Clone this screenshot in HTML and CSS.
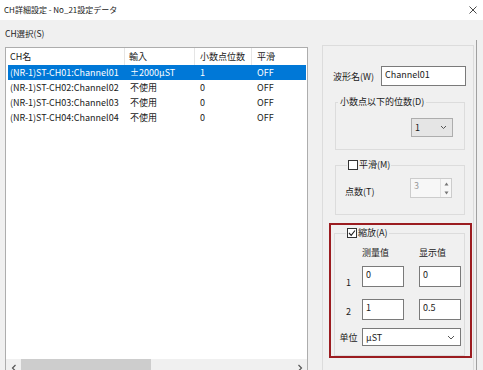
FILE: index.html
```html
<!DOCTYPE html>
<html lang="ja">
<head>
    <meta charset="UTF-8">
    <title>CH詳細設定</title>
    <link rel="stylesheet" href="styles.css">
</head>
<body>
    <div class="window">
        <div class="titlebar">
            <span class="title">CH詳細設定 - No_21設定データ</span>
            <svg class="close" width="8" height="8" viewBox="0 0 8 8"><path d="M0.5 0.5 L7.5 7.5 M7.5 0.5 L0.5 7.5" stroke="#333" stroke-width="0.9"/></svg>
        </div>
        <div class="body">
            <div class="ch-label">CH選択(S)</div>
            <div class="content">
                <!-- channel list -->
                <div class="listbox">
                    <div class="list-head">
                        <div class="hcell c1">CH名</div>
                        <div class="hcell c2">輸入</div>
                        <div class="hcell c3">小数点位数</div>
                        <div class="hcell c4">平滑</div>
                    </div>
                    <div class="list-rows">
                        <div class="row selected">
                            <div class="cell c1">(NR-1)ST-CH01:Channel01</div>
                            <div class="cell c2">±2000μST</div>
                            <div class="cell c3">1</div>
                            <div class="cell c4">OFF</div>
                        </div>
                        <div class="row">
                            <div class="cell c1">(NR-1)ST-CH02:Channel02</div>
                            <div class="cell c2">不使用</div>
                            <div class="cell c3">0</div>
                            <div class="cell c4">OFF</div>
                        </div>
                        <div class="row">
                            <div class="cell c1">(NR-1)ST-CH03:Channel03</div>
                            <div class="cell c2">不使用</div>
                            <div class="cell c3">0</div>
                            <div class="cell c4">OFF</div>
                        </div>
                        <div class="row">
                            <div class="cell c1">(NR-1)ST-CH04:Channel04</div>
                            <div class="cell c2">不使用</div>
                            <div class="cell c3">0</div>
                            <div class="cell c4">OFF</div>
                        </div>
                    </div>
                    <div class="hscroll">
                        <svg class="arrow" width="6" height="8" viewBox="0 0 6 8"><path d="M4.5 1 L1.5 4 L4.5 7" fill="none" stroke="#555" stroke-width="1.2"/></svg>
                        <div class="thumb"></div>
                        <div class="track"></div>
                        <svg class="arrow" width="6" height="8" viewBox="0 0 6 8"><path d="M1.5 1 L4.5 4 L1.5 7" fill="none" stroke="#555" stroke-width="1.2"/></svg>
                    </div>
                </div>

                <!-- settings panel -->
                <div class="side">
                    <div class="name-row">
                        <label class="name-label" for="wave">波形名(W)</label>
                        <input class="textbox name-input" id="wave" type="text" value="Channel01">
                    </div>

                    <fieldset class="group group-d">
                        <legend>小数点以下的位数(D)</legend>
                        <div class="combo combo-gray">
                            <span>1</span>
                            <svg width="7" height="5" viewBox="0 0 7 5"><path d="M1 1 L3.5 3.5 L6 1" fill="none" stroke="#555" stroke-width="1"/></svg>
                        </div>
                    </fieldset>

                    <fieldset class="group group-m">
                        <legend><span class="check"></span>平滑(M)</legend>
                        <div class="points-row">
                            <span>点数(T)</span>
                            <div class="spinner">
                                <span class="spin-val">3</span>
                                <div class="spin-btns">
                                    <svg width="5" height="4" viewBox="0 0 5 4"><path d="M0.5 3.5 L2.5 0.5 L4.5 3.5 Z" fill="#777"/></svg>
                                    <svg width="5" height="4" viewBox="0 0 5 4"><path d="M0.5 0.5 L2.5 3.5 L4.5 0.5 Z" fill="#777"/></svg>
                                </div>
                            </div>
                        </div>
                    </fieldset>

                    <div class="highlight-box">
                        <fieldset class="group group-a">
                            <legend>
                                <span class="check checked">
                                    <svg width="8" height="8" viewBox="0 0 8 8"><path d="M1 4 L3.2 6.3 L7 1.5" fill="none" stroke="#222" stroke-width="1.1"/></svg>
                                </span>縮放(A)
                            </legend>
                            <div class="scale-row scale-head">
                                <span class="lbl"></span>
                                <span class="col">测量值</span>
                                <span class="col">显示值</span>
                            </div>
                            <div class="scale-row r1">
                                <span class="lbl">1</span>
                                <input class="textbox small" type="text" value="0">
                                <input class="textbox small" type="text" value="0">
                            </div>
                            <div class="scale-row r2">
                                <span class="lbl">2</span>
                                <input class="textbox small" type="text" value="1">
                                <input class="textbox small" type="text" value="0.5">
                            </div>
                            <div class="scale-row unit-row">
                                <span class="lbl">单位</span>
                                <div class="combo combo-white">
                                    <span>μST</span>
                                    <svg width="8" height="5" viewBox="0 0 8 5"><path d="M1 1 L4 4 L7 1" fill="none" stroke="#555" stroke-width="1"/></svg>
                                </div>
                            </div>
                        </fieldset>
                    </div>
                </div>
                <div class="edge"></div>
            </div>
        </div>
    </div>
</body>
</html>
```

FILE: styles.css
```css
html, body {
    margin: 0;
    padding: 0;
    height: 100%;
}
body {
    font-family: "Noto Sans CJK JP", "Noto Sans", sans-serif;
    font-size: 9px;
    color: #1a1a1a;
    background: #f0f0f0;
}
.window {
    width: 483px;
    height: 370px;
    overflow: hidden;
}
.titlebar {
    height: 20px;
    background: #fff;
    display: flex;
    align-items: center;
    justify-content: space-between;
    padding: 0 6px 0 4px;
}
.title {
    font-size: 8px;
    line-height: 12px;
}
.body {
    height: 350px;
    background: #f0f0f0;
    overflow: hidden;
}
.ch-label {
    padding: 6px 0 0 5px;
    font-size: 8.5px;
    line-height: 14px;
}
.content {
    display: flex;
    align-items: flex-start;
}

/* list */
.listbox {
    margin: 7px 0 0 5px;
    width: 301px;
    height: 328px;
    border: 1px solid #adadad;
    background: #fff;
    display: flex;
    flex-direction: column;
}
.list-head {
    display: flex;
    height: 17px;
    align-items: center;
}
.hcell {
    box-sizing: border-box;
    height: 17px;
    line-height: 17px;
    padding-left: 4px;
    border-right: 1px solid #e5e5e5;
}
.hcell.c1 { width: 119px; }
.hcell.c2 { width: 70px; padding-left: 4px; }
.hcell.c3 { width: 57px; padding-left: 5px; }
.hcell.c4 { flex: 1; padding-left: 5px; border-right: none; }
.list-rows {
    flex: 1;
    padding: 0 1px 0 2px;
}
.row {
    display: flex;
    height: 15px;
    line-height: 15px;
}
.row.selected {
    background: #0078d7;
    color: #fff;
}
.cell {
    box-sizing: border-box;
    padding-left: 5px;
    white-space: nowrap;
}
.cell.c1 { width: 117px; padding-left: 2px; }
.cell.c2 { width: 70px; }
.cell.c3 { width: 57px; }
.cell.c4 { flex: 1; }
.hscroll {
    height: 17px;
    background: #f0f0f0;
    display: flex;
    align-items: center;
}
.hscroll .arrow {
    margin: 0 4px 0 5px;
}
.thumb {
    width: 130px;
    height: 17px;
    background: #cdcdcd;
}
.track {
    flex: 1;
}

/* right panel */
.side {
    margin: 5px 0 0 14px;
    width: 150px;
    height: 340px;
    border: 1px solid #dcdcdc;
}
.edge {
    margin-left: 2px;
    width: 1px;
    height: 350px;
    background: #a0a0a0;
}
.name-row {
    display: flex;
    align-items: center;
    margin-top: 20px;
    padding-left: 10px;
}
.name-label {
    width: 48px;
}
.textbox {
    box-sizing: border-box;
    font: inherit;
    color: #1a1a1a;
    border: 1px solid #7a7a7a;
    background: #fff;
    padding: 1px 3px 0;
    margin: 0;
    outline: none;
    text-align: left;
    vertical-align: top;
    flex-shrink: 0;
}
.name-input {
    width: 85px;
    height: 20px;
    padding-top: 0;
    padding-bottom: 4px;
}
.group {
    margin: 0;
    padding: 0;
    border: 1px solid #dcdcdc;
    min-width: 0;
}
.group legend {
    padding: 0 2px;
    line-height: 12px;
    display: flex;
    align-items: center;
}
.group-d {
    margin: 10px 0 0 12px;
    width: 130px;
    box-sizing: border-box;
    padding: 0 11px 12px 0;
}
.group-d legend {
    margin-left: 2px;
}
.combo {
    box-sizing: border-box;
    display: flex;
    align-items: center;
    justify-content: space-between;
    flex-shrink: 0;
}
.combo-gray {
    margin: 10px 0 0 auto;
    width: 42px;
    height: 19px;
    background: #e5e5e5;
    border: 1px solid #adadad;
    padding: 0 5px 0 3px;
}
.combo-white {
    width: 99px;
    height: 18px;
    background: #fff;
    border: 1px solid #7a7a7a;
    padding: 0 5px 0 3px;
}
.check {
    box-sizing: border-box;
    width: 10px;
    height: 10px;
    border: 1px solid #333;
    background: #fff;
    margin-right: 1px;
    display: inline-flex;
    align-items: center;
    justify-content: center;
}
.group-m {
    margin: 9px 0 0 12px;
    width: 130px;
    box-sizing: border-box;
    padding: 0 12px 16px 9px;
}
.group-m legend {
    margin-left: 2px;
    padding: 0 1px;
}
.points-row {
    display: flex;
    align-items: flex-end;
    justify-content: space-between;
    margin-top: 7px;
}
.points-row > span {
    line-height: 12px;
}
.spinner {
    box-sizing: border-box;
    width: 42px;
    height: 20px;
    border: 1px solid #cccccc;
    background: #f7f7f7;
    display: flex;
    justify-content: space-between;
}
.spin-val {
    color: #9a9a9a;
    padding-left: 3px;
    line-height: 13px;
}
.spin-btns {
    width: 10px;
    display: flex;
    flex-direction: column;
    align-items: center;
    justify-content: space-around;
    border-left: 1px solid #e2e2e2;
}
.highlight-box {
    margin: 8px 0 0 6px;
    width: 143px;
    height: 135px;
    box-sizing: border-box;
    border: 2px solid #9b1c20;
    padding: 2px 0 0 3px;
}
.group-a {
    width: 131px;
    box-sizing: border-box;
    padding: 0 0 9px 0;
}
.group-a legend {
    margin-left: 11px;
    padding: 0 1px;
}
.scale-row {
    display: flex;
    align-items: center;
}
.scale-row .lbl {
    width: 27px;
    flex-shrink: 0;
    text-align: center;
}
.scale-row .col {
    width: 57px;
    flex-shrink: 0;
}
.scale-head {
    margin-top: 8px;
    height: 12px;
    line-height: 12px;
}
.r1 { margin-top: 5px; }
.r1 .lbl { padding-top: 12px; }
.r2 { margin-top: 10px; }
.r2 .lbl { padding-top: 3px; }
.unit-row { margin-top: 8px; }
.textbox.small {
    width: 42px;
    height: 21px;
    padding-bottom: 6px;
}
.textbox.small + .textbox.small {
    margin-left: 15px;
}
```
